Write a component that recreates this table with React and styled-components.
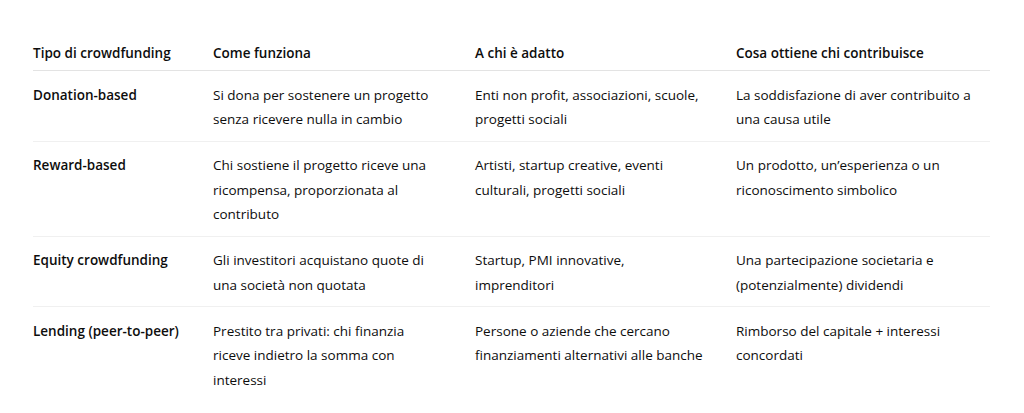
import React from "react";
import styled, { createGlobalStyle } from "styled-components";

const GlobalStyle = createGlobalStyle`
  html, body { margin: 0; padding: 0; background: #ffffff; }
  body { font-family: "Open Sans", "Noto Sans", sans-serif; color: #0d0d0d; }
`;

const Page = styled.div`
  padding: 29px 34px 0 33px;
`;

const Table = styled.table`
  width: 957px;
  border-collapse: collapse;
  table-layout: fixed;
  font-size: 13.5px;
  line-height: 24.5px;
`;

const Th = styled.th`
  text-align: left;
  font-weight: 600;
  padding: 11.5px 0 5px 0;
  border-bottom: 1px solid #e3e3e3;
  white-space: nowrap;
`;

const Tr = styled.tr`
  border-bottom: 1px solid ${(p) => (p.$last ? "transparent" : "#f0f0f0")};
`;

const Td = styled.td`
  vertical-align: top;
  padding: 11.5px 0 9px 0;
  font-weight: ${(p) => (p.$strong ? 600 : 400)};
  white-space: nowrap;
`;

const cols = [180, 262, 261, 254];

const headers = [
  "Tipo di crowdfunding",
  "Come funziona",
  "A chi è adatto",
  "Cosa ottiene chi contribuisce",
];

const rows = [
  [
    ["Donation-based"],
    ["Si dona per sostenere un progetto", "senza ricevere nulla in cambio"],
    ["Enti non profit, associazioni, scuole,", "progetti sociali"],
    ["La soddisfazione di aver contribuito a", "una causa utile"],
  ],
  [
    ["Reward-based"],
    ["Chi sostiene il progetto riceve una", "ricompensa, proporzionata al", "contributo"],
    ["Artisti, startup creative, eventi", "culturali, progetti sociali"],
    ["Un prodotto, un’esperienza o un", "riconoscimento simbolico"],
  ],
  [
    ["Equity crowdfunding"],
    ["Gli investitori acquistano quote di", "una società non quotata"],
    ["Startup, PMI innovative,", "imprenditori"],
    ["Una partecipazione societaria e", "(potenzialmente) dividendi"],
  ],
  [
    ["Lending (peer-to-peer)"],
    ["Prestito tra privati: chi finanzia", "riceve indietro la somma con", "interessi"],
    ["Persone o aziende che cercano", "finanziamenti alternativi alle banche"],
    ["Rimborso del capitale + interessi", "concordati"],
  ],
];

const Lines = ({ lines }) =>
  lines.map((l, i) => (
    <React.Fragment key={i}>
      {i > 0 && <br />}
      {l}
    </React.Fragment>
  ));

export default function App() {
  return (
    <>
      <GlobalStyle />
      <Page>
        <Table>
          <colgroup>
            {cols.map((w, i) => (
              <col key={i} style={{ width: w }} />
            ))}
          </colgroup>
          <thead>
            <tr>
              {headers.map((h) => (
                <Th key={h}>{h}</Th>
              ))}
            </tr>
          </thead>
          <tbody>
            {rows.map((r, ri) => (
              <Tr key={ri} $last={ri === rows.length - 1}>
                {r.map((c, ci) => (
                  <Td key={ci} $strong={ci === 0}>
                    <Lines lines={c} />
                  </Td>
                ))}
              </Tr>
            ))}
          </tbody>
        </Table>
      </Page>
    </>
  );
}
